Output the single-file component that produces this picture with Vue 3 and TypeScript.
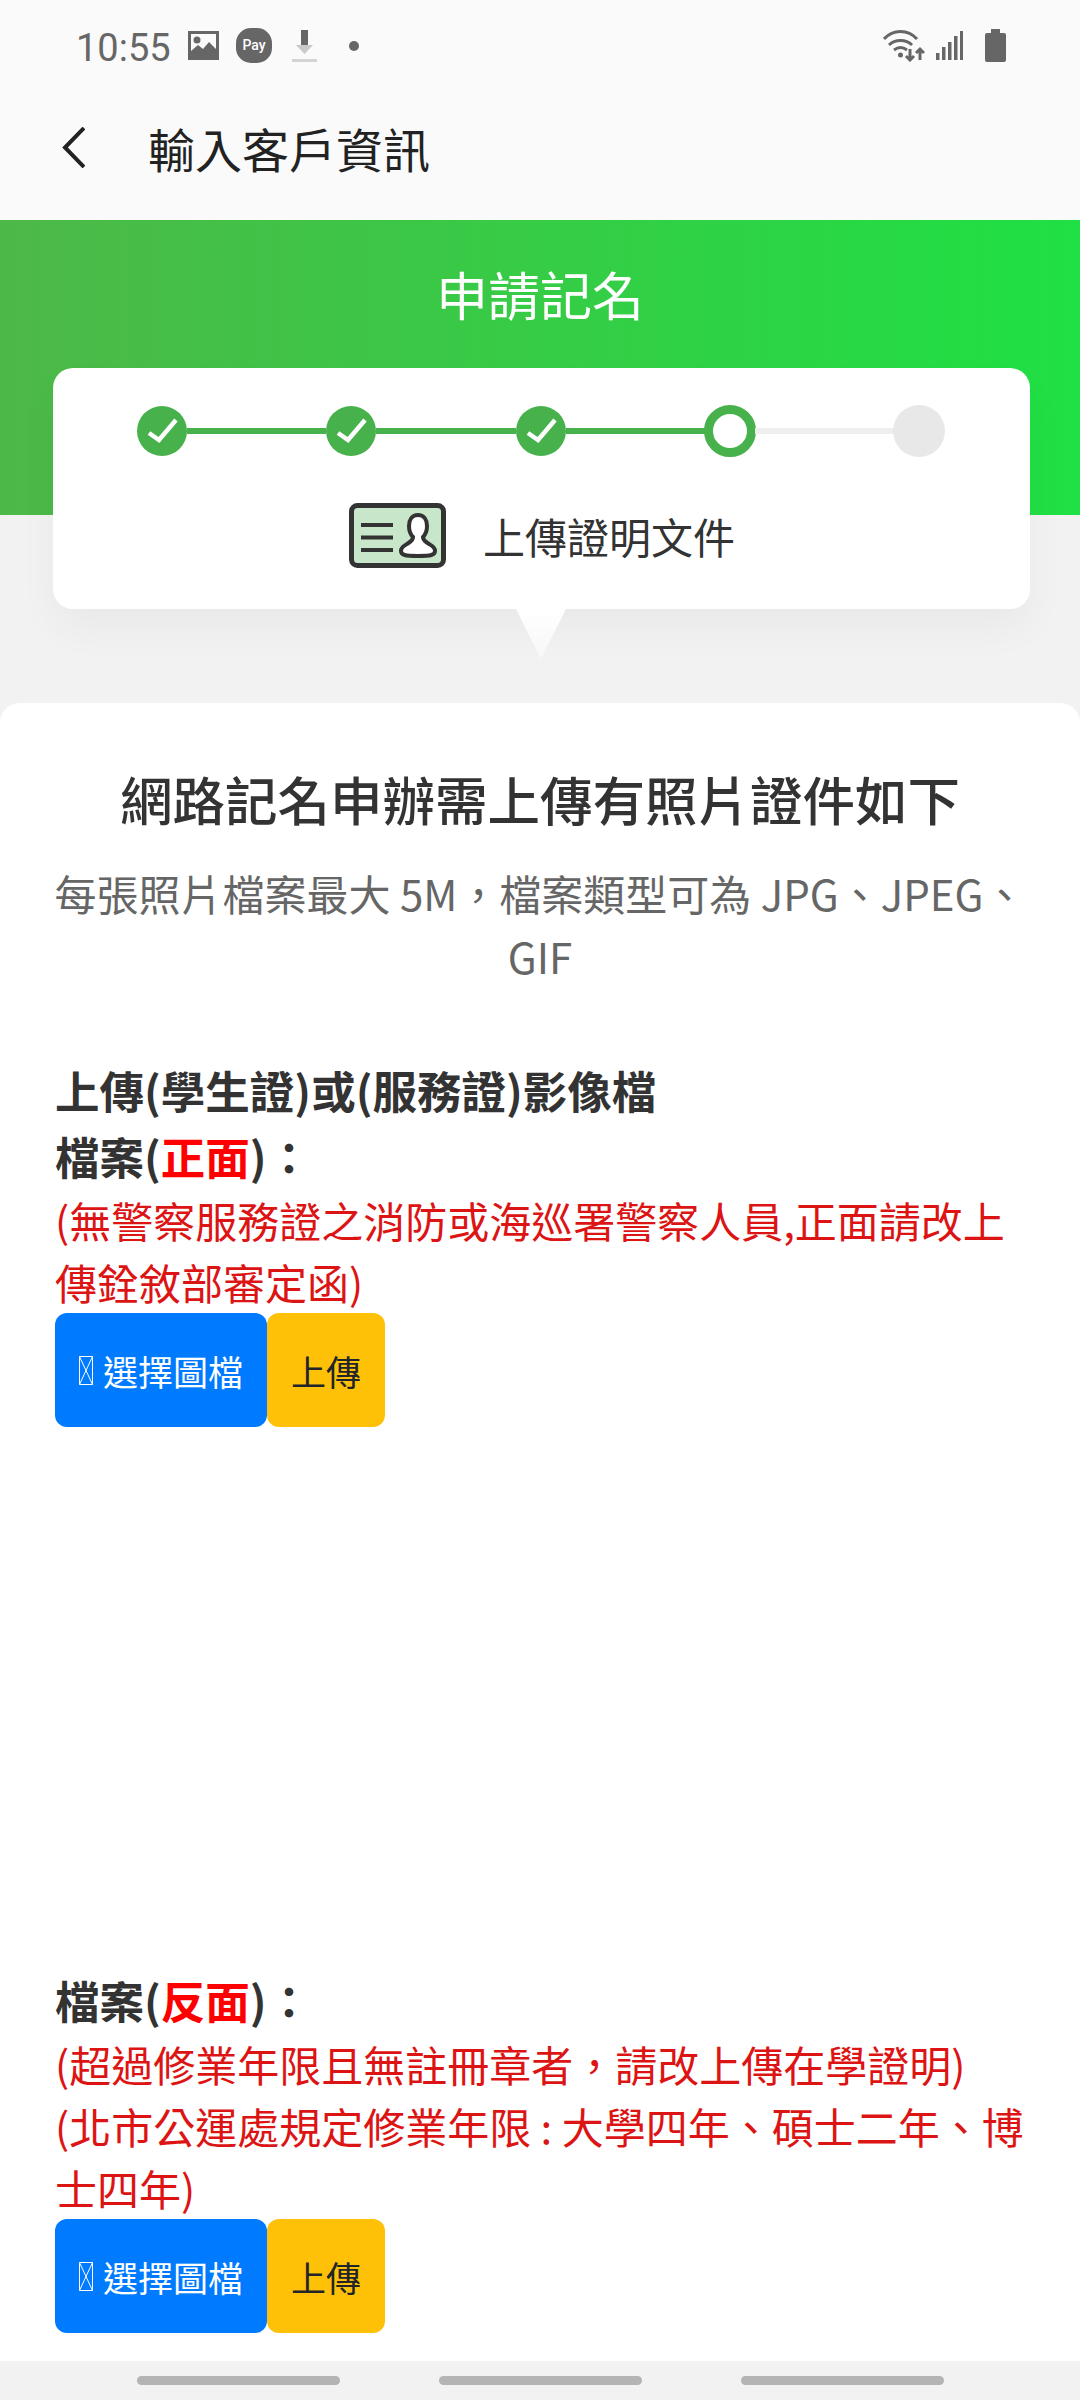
<template>
  <div class="page">
    <div class="status-bar">
      <span class="time">10:55</span>
      <svg class="ic-image" width="31" height="29" viewBox="0 0 31 29">
        <rect width="31" height="29" fill="#666" />
        <rect x="3" y="3" width="25" height="23" fill="#fafafa" />
        <circle cx="9" cy="9" r="3.5" fill="#666" />
        <path d="M3 20l7-6 5 4 6-7 7 7v8H3z" fill="#666" />
      </svg>
      <svg class="ic-pay" width="36" height="35" viewBox="0 0 36 35">
        <rect width="36" height="35" rx="15" fill="#666" />
        <text x="18" y="22" text-anchor="middle" class="pay-text">Pay</text>
      </svg>
      <svg class="ic-download" width="25" height="32" viewBox="0 0 25 32">
        <rect x="9" y="0" width="7" height="15" fill="#666" />
        <path d="M4 15h17l-8.500 9z" fill="#c9c9c9" />
        <rect x="0" y="29" width="25" height="3" fill="#d4d4d4" />
      </svg>
      <span class="dot"></span>
      <span class="status-space"></span>
      <svg class="ic-wifi" width="42" height="32" viewBox="0 0 42 32" fill="none" stroke="#666" stroke-width="3">
        <path d="M1 9c9-10 24-10 33 0" />
        <path d="M6 15c6-6 17-6 23 0" />
        <path d="M11 20c4-3 9-3 13 0" />
        <circle cx="17.500" cy="25" r="2.500" fill="#666" stroke="none" />
        <path d="M27 19v11M23 26l4 4 4-4" />
        <path d="M37 30V19M33 23l4-4 4 4" />
      </svg>
      <svg class="ic-signal" width="27" height="29" viewBox="0 0 27 29" fill="#666">
        <rect x="0" y="22" width="3.500" height="7" />
        <rect x="6" y="16" width="3.500" height="13" />
        <rect x="12" y="11" width="3.500" height="18" />
        <rect x="18" y="5" width="3.500" height="24" />
        <rect x="24" y="0" width="3" height="29" />
      </svg>
      <svg class="ic-battery" width="21" height="33" viewBox="0 0 21 33" fill="#666">
        <rect x="6" y="0" width="9" height="4" />
        <rect x="0" y="4" width="21" height="29" rx="2" />
      </svg>
    </div>

    <header class="app-header">
      <svg width="23" height="41" viewBox="0 0 23 41" fill="none" stroke="#222" stroke-width="4">
        <path d="M22 1L3 20.500 22 40" />
      </svg>
      <h1 class="app-title">輸入客戶資訊</h1>
    </header>

    <section class="hero">
      <h2 class="hero-title">申請記名</h2>
      <div class="step-card">
        <div class="steps">
          <template v-for="(step, i) in steps" :key="i">
            <span v-if="i > 0" class="step-line" :class="{ done: step !== 'todo' }"></span>
            <span class="step" :class="step">
              <svg v-if="step === 'done'" width="50" height="50" viewBox="0 0 50 50" fill="none" stroke="#fff" stroke-width="4.500">
                <path d="M12 27l10 7 17-20" />
              </svg>
            </span>
          </template>
        </div>
        <div class="step-name">
          <svg width="97" height="65" viewBox="0 0 97 65">
            <rect x="2.500" y="2.500" width="92" height="60" rx="6" fill="#c8e6c9" stroke="#333" stroke-width="5" />
            <path d="M12 22h32M12 34.500h32M12 47h32" stroke="#333" stroke-width="4" />
            <path d="M69 12c-6 0-9 5-9 11 0 5 2 9 4 11 0 4-3 5-6 7-4 2-6 4-6 7 0 4 4 5 17 5s17-1 17-5c0-3-2-5-6-7-3-2-6-3-6-7 2-2 4-6 4-11 0-6-3-11-9-11z" fill="#fff" stroke="#333" stroke-width="4" />
          </svg>
          <span>上傳證明文件</span>
        </div>
      </div>
      <div class="step-arrow"></div>
    </section>

    <main class="content">
      <h3 class="content-title">網路記名申辦需上傳有照片證件如下</h3>
      <p class="content-sub">每張照片檔案最大 5M，檔案類型可為 JPG、JPEG、GIF</p>

      <div class="upload-block first">
        <p class="label">上傳(學生證)或(服務證)影像檔</p>
        <p class="label">檔案(<em>正面</em>)：</p>
        <p class="note">(無警察服務證之消防或海巡署警察人員,正面請改上傳銓敘部審定函)</p>
        <div class="btn-row">
          <button class="btn pick">
            <svg class="tofu" width="14" height="29" viewBox="0 0 14 29" fill="none" stroke="#fff" stroke-width="1">
              <path d="M.5.500h13v28H.5zM.5.500l13 28M13.500.500L.5 28.500" />
            </svg>
            選擇圖檔
          </button>
          <button class="btn send">上傳</button>
        </div>
      </div>

      <div class="preview-space"></div>

      <div class="upload-block">
        <p class="label">檔案(<em>反面</em>)：</p>
        <p class="note">(超過修業年限且無註冊章者，請改上傳在學證明)</p>
        <p class="note">(北市公運處規定修業年限 : 大學四年、碩士二年、博士四年)</p>
        <div class="btn-row">
          <button class="btn pick">
            <svg class="tofu" width="14" height="29" viewBox="0 0 14 29" fill="none" stroke="#fff" stroke-width="1">
              <path d="M.5.500h13v28H.5zM.5.500l13 28M13.500.500L.5 28.500" />
            </svg>
            選擇圖檔
          </button>
          <button class="btn send">上傳</button>
        </div>
      </div>
    </main>

    <nav class="nav-bar">
      <span></span>
      <span></span>
      <span></span>
    </nav>
  </div>
</template>

<script setup lang="ts">
type StepState = 'done' | 'current' | 'todo';

const steps: StepState[] = ['done', 'done', 'done', 'current', 'todo'];
</script>

<style>
body {
  background: #f2f2f2;
}
</style>

<style scoped>
.page {
  width: 1080px;
  height: 2400px;
  display: flex;
  flex-direction: column;
  overflow: hidden;
  background: #f2f2f2;
  font-family: "Noto Sans CJK TC", "Noto Sans", sans-serif;
  color: #333;
}

.status-bar {
  height: 90px;
  box-sizing: border-box;
  padding: 1px 74px 0 76px;
  display: flex;
  align-items: center;
  background: #fafafa;
}

.time {
  font-family: Roboto, sans-serif;
  font-size: 38px;
  color: #666;
  margin: 5px 17px 0 0;
}

.ic-image {
  margin-right: 17px;
}

.ic-pay {
  margin-right: 20px;
}

.pay-text {
  font-family: Roboto, sans-serif;
  font-size: 14px;
  font-weight: 500;
  fill: #fff;
}

.ic-download {
  margin-right: 32px;
}

.dot {
  width: 10px;
  height: 10px;
  border-radius: 50%;
  background: #666;
}

.status-space {
  flex: 1;
}

.ic-wifi {
  margin-right: 11px;
}

.ic-signal {
  margin-right: 22px;
}

.app-header {
  height: 130px;
  box-sizing: border-box;
  padding: 0 0 16px 62px;
  display: flex;
  align-items: center;
  gap: 63px;
  background: #fafafa;
}

.app-title {
  margin: 0;
  font-size: 47px;
  font-weight: 400;
  color: #222;
}

.hero {
  padding-top: 39px;
  background: linear-gradient(90deg, #4db848, #1fe044) 0 0 / 100% 295px no-repeat;
}

.hero-title {
  margin: 0;
  font-size: 52px;
  line-height: 70px;
  font-weight: 400;
  color: #fff;
  text-align: center;
}

.step-card {
  margin: 39px 50px 0 53px;
  padding: 38px 86px 41px 84px;
  background: #fff;
  border-radius: 20px;
  box-shadow: 0 20px 40px rgba(0, 0, 0, 0.04);
}

.steps {
  display: flex;
  align-items: center;
}

.step {
  width: 50px;
  height: 50px;
  flex: none;
  border-radius: 50%;
  box-sizing: border-box;
}

.step svg {
  display: block;
}

.step.done {
  background: #47b14b;
}

.step.current {
  width: 52px;
  height: 52px;
  margin: -1px;
  border: 9px solid #47b14b;
  background: #fff;
}

.step.todo {
  width: 52px;
  height: 52px;
  margin: -1px;
  background: #e8e8e8;
}

.step-line {
  flex: 1;
  height: 6px;
  background: #eeeeee;
}

.step-line.done {
  background: #47b14b;
}

.step-name {
  margin: 47px 0 0 3px;
  display: flex;
  align-items: center;
  justify-content: center;
  gap: 37px;
  font-size: 42px;
  color: #333;
}

.step-arrow {
  width: 50px;
  height: 50px;
  margin: 0 auto;
  transform: translateX(1px);
  background: linear-gradient(#ffffff, #f7f7f7);
  clip-path: polygon(0 0, 100% 0, 50% 100%);
}

.content {
  flex: 1;
  margin-top: 44px;
  padding: 60px 55px 0;
  background: #fff;
  border-radius: 20px 20px 0 0;
}

.content-title {
  margin: 0;
  font-size: 52.5px;
  line-height: 70px;
  font-weight: 500;
  text-align: center;
  color: #333;
}

.content-sub {
  margin: 28px -15px 0;
  font-size: 42px;
  line-height: 63px;
  color: #666;
  text-align: center;
}

.upload-block.first {
  margin-top: 70px;
}

.label {
  margin: 0;
  font-size: 44.5px;
  line-height: 66px;
  font-weight: 700;
  color: #333;
}

.label em {
  font-style: normal;
  color: #ff0000;
}

.note {
  margin: 0;
  font-size: 42px;
  line-height: 62px;
  color: #dc1414;
}

.btn-row {
  display: flex;
}

.btn {
  height: 114px;
  padding: 0 24px;
  border: 0;
  border-radius: 12px;
  display: flex;
  align-items: center;
  font-family: inherit;
  font-size: 35px;
}

.pick {
  background: #007bff;
  color: #fff;
}

.tofu {
  margin-right: 10px;
}

.send {
  background: #ffc107;
  color: #212529;
}

.preview-space {
  height: 540px;
}

.nav-bar {
  height: 39px;
  display: flex;
  justify-content: center;
  gap: 99px;
  padding-top: 15px;
  box-sizing: border-box;
  background: #f2f2f2;
}

.nav-bar span {
  width: 203px;
  height: 9px;
  border-radius: 5px;
  background: #b4b4b4;
}
</style>
